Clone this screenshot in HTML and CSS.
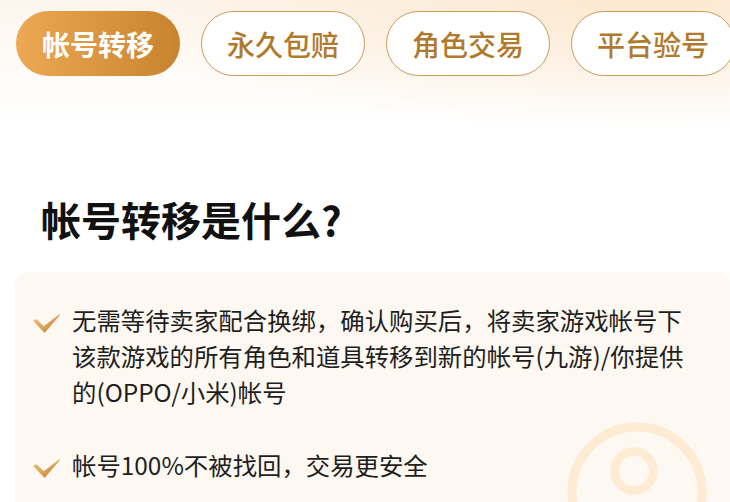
FILE: index.html
```html
<!DOCTYPE html>
<html lang="zh-CN">
<head>
    <meta charset="UTF-8">
    <meta name="viewport" content="width=device-width, initial-scale=1.0">
    <title>帐号转移</title>
    <link rel="stylesheet" href="styles.css">
</head>
<body>
    <div class="page">
        <nav class="tabs">
            <div class="tab active">帐号转移</div>
            <div class="tab">永久包赔</div>
            <div class="tab">角色交易</div>
            <div class="tab">平台验号</div>
        </nav>

        <h1 class="title">帐号转移是什么?</h1>

        <div class="card">
            <ul class="points">
                <li class="point">
                    <svg class="check" viewBox="0 0 27 19" width="27" height="19">
                        <defs>
                            <linearGradient id="gold" x1="0" y1="0" x2="1" y2="1">
                                <stop offset="0" stop-color="#f4c682"/>
                                <stop offset="1" stop-color="#c27f2a"/>
                            </linearGradient>
                        </defs>
                        <path d="M0 6.8 L3.6 5.2 L10.6 12.2 L26.6 0.2 L27 1 L11.6 19 Z" fill="url(#gold)"/>
                    </svg>
                    <p>无需等待卖家配合换绑，确认购买后，将卖家游戏帐号下该款游戏的所有角色和道具转移到新的帐号(九游)/你提供的(OPPO/小米)帐号</p>
                </li>
                <li class="point">
                    <svg class="check" viewBox="0 0 27 19" width="27" height="19">
                        <path d="M0 6.8 L3.6 5.2 L10.6 12.2 L26.6 0.2 L27 1 L11.6 19 Z" fill="url(#gold)"/>
                    </svg>
                    <p>帐号100%不被找回，交易更安全</p>
                </li>
            </ul>
            <!-- faint avatar watermark in the card corner -->
            <svg class="mark" viewBox="0 0 160 160" width="160" height="160">
                <circle cx="80" cy="80" r="65" fill="none" stroke="#fdecd3" stroke-width="9"/>
                <circle cx="77" cy="59" r="19.5" fill="none" stroke="#fdecd3" stroke-width="8.5"/>
                <path d="M42 118 C48 92 106 92 112 118" fill="none" stroke="#fdecd3" stroke-width="8"/>
            </svg>
        </div>
    </div>
</body>
</html>
```

FILE: styles.css
```css
* {
    box-sizing: border-box;
}
body {
    margin: 0;
    font-family: "Noto Sans CJK SC", "Noto Sans", sans-serif;
    color: #1a1a1a;
    background: #fff;
    overflow: hidden;
}
.page {
    width: 730px;
    height: 502px;
    overflow: hidden;
    background:
        radial-gradient(ellipse 560px 130px at 88% 0, rgba(251, 226, 196, 0.7), rgba(255, 255, 255, 0) 100%),
        linear-gradient(180deg, #fdf6ee 0, #ffffff 120px);
}
.tabs {
    display: flex;
    gap: 21px;
    padding: 11px 0 0 16px;
}
.tab {
    flex: 0 0 164px;
    height: 65px;
    border-radius: 33px;
    border: 1.5px solid #c99b5c;
    background: #fff;
    color: #b07a2d;
    font-size: 28px;
    font-weight: 500;
    display: flex;
    align-items: center;
    justify-content: center;
}
.tab.active {
    border: none;
    background: linear-gradient(90deg, #eca852, #c8832f);
    color: #fff;
    font-weight: 700;
}
.title {
    margin: 0;
    padding: 119px 0 0 41px;
    font-size: 40px;
    line-height: 48px;
    font-weight: 700;
    color: #111;
}
.card {
    position: relative;
    width: 716px;
    margin: 29px 0 0 15px;
    height: 260px;
    border-radius: 14px;
    background: #fdf8f1;
    overflow: hidden;
}
.points {
    position: relative;
    z-index: 1;
    list-style: none;
    margin: 0;
    padding: 30px 0 0 0;
}
.point {
    display: flex;
    align-items: flex-start;
    margin-bottom: 37px;
}
.check {
    flex: 0 0 27px;
    margin: 12px 12px 0 18px;
}
.point p {
    margin: 0;
    width: 625px;
    font-size: 24.4px;
    line-height: 36px;
    color: #1e1e1e;
}
.mark {
    position: absolute;
    left: 542px;
    top: 140px;
}
```
